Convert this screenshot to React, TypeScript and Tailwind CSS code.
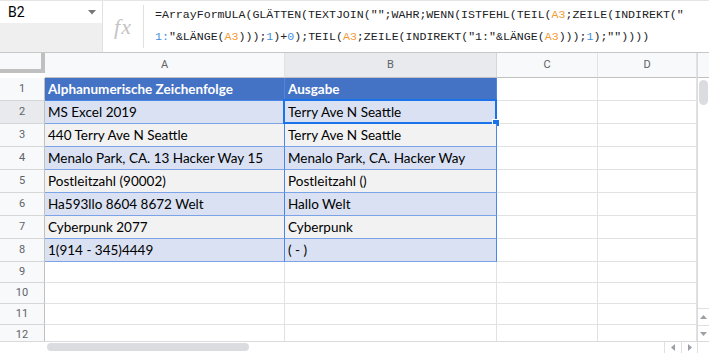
import { ChevronDown } from 'lucide-react';

const rows: [string, string][] = [
  ['MS Excel 2019', 'Terry Ave N Seattle'],
  ['440 Terry Ave N Seattle', 'Terry Ave N Seattle'],
  ['Menalo Park, CA. 13 Hacker Way 15', 'Menalo Park, CA. Hacker Way'],
  ['Postleitzahl (90002)', 'Postleitzahl ()'],
  ['Ha593llo 8604 8672 Welt', 'Hallo Welt'],
  ['Cyberpunk 2077', 'Cyberpunk'],
  ['1(914 - 345)4449', '( - )'],
];

const O = ({ children }: { children: string }) => <span className="text-[#f29a38]">{children}</span>;
const N = ({ children }: { children: string }) => <span className="text-[#3f8fe0]">{children}</span>;

const RowHead = ({ n, h, active }: { n: number; h: string; active?: boolean }) => (
  <div
    className={`w-[45px] shrink-0 ${h} flex items-center justify-center border-r border-b border-r-[#c0c0c0] border-b-[#d6d6d6] text-[11px] text-[#5f6368] ${active ? 'bg-[#e8eaed]' : 'bg-[#f8f9fa]'}`}
    style={{ fontFamily: 'Roboto, sans-serif' }}
  >
    {n}
  </div>
);

const Empty = ({ w }: { w: string }) => <div className={`${w} shrink-0 border-r border-b border-[#e2e2e2]`} />;

export default function App() {
  return (
    <div className="w-[709px] h-[353px] overflow-hidden bg-white flex flex-col" style={{ fontFamily: 'Roboto, sans-serif' }}>
      {/* formula bar */}
      <div className="h-[53px] shrink-0 flex border-t border-t-[#e5e5e5] border-b border-b-[#c7c7c7]">
        <div className="w-[103px] shrink-0 flex flex-col border-r border-[#e0e0e0]">
          <div className="h-[22px] bg-white flex items-center justify-between pl-[8px] pr-[6px] text-[14px] text-black">
            <span>B2</span>
            <svg width="8" height="5" viewBox="0 0 8 5"><path d="M0 0h8L4 4.5z" fill="#777" /></svg>
          </div>
          <div className="flex-1 bg-[#efefef]" />
        </div>
        <div className="w-[41px] shrink-0 flex items-center justify-center border-r border-[#e0e0e0] my-[4px]">
          <span className="italic text-[22px] text-[#c4c4c4] tracking-[1px]" style={{ fontFamily: '"Liberation Serif", serif' }}>fx</span>
        </div>
        <div className="flex-1 pl-[11px] pt-[3px] text-[11.6px] leading-[22px] text-[#202124] whitespace-pre" style={{ fontFamily: '"Liberation Mono", monospace' }}>
          <div>=ArrayFormULA(GLÄTTEN(TEXTJOIN("";WAHR;WENN(ISTFEHL(TEIL(<O>A3</O>;ZEILE(INDIREKT("</div>
          <div>
            <N>1:</N>"&LÄNGE(<O>A3</O>)));<N>1</N>)+<N>0</N>);TEIL(<O>A3</O>;ZEILE(INDIREKT("1:"&LÄNGE(<O>A3</O>)));<N>1</N>);""))))
          </div>
        </div>
      </div>

      {/* grid */}
      <div className="h-[288px] shrink-0 flex">
        <div className="w-[697px] shrink-0 overflow-hidden flex flex-col">
          {/* column headers */}
          <div className="h-[25px] shrink-0 flex text-[11px] text-[#5f6368]">
            <div className="w-[45px] shrink-0 bg-[#f8f9fa] border-r-4 border-b-4 border-[#c0c0c0] mb-[5px]" />
            <div className="w-[240px] shrink-0 flex items-center justify-center bg-[#f8f9fa] border-r border-b border-r-[#e2e2e2] border-b-[#c0c0c0]">A</div>
            <div className="w-[212px] shrink-0 flex items-center justify-center bg-[#e8eaed] border-r border-b border-r-[#d6d6d6] border-b-[#c0c0c0]">B</div>
            <div className="w-[101px] shrink-0 flex items-center justify-center bg-[#f8f9fa] border-r border-b border-r-[#e2e2e2] border-b-[#c0c0c0]">C</div>
            <div className="w-[99px] shrink-0 flex items-center justify-center bg-[#f8f9fa] border-r border-b border-r-[#e2e2e2] border-b-[#c0c0c0]">D</div>
          </div>

          {/* header row of table */}
          <div className="h-[23px] shrink-0 flex" style={{ fontFamily: 'Lato, sans-serif' }}>
            <RowHead n={1} h="h-[23px]" />
            <div className="w-[240px] shrink-0 bg-[#4472c4] border-r border-b border-[#4a86e8] flex items-center pl-[3px] text-[13.5px] font-bold text-white">Alphanumerische Zeichenfolge</div>
            <div className="w-[212px] shrink-0 bg-[#4472c4] border-r border-b border-[#4a86e8] flex items-center pl-[3px] text-[13.5px] font-bold text-white">Ausgabe</div>
            <Empty w="w-[101px]" />
            <Empty w="w-[99px]" />
          </div>

          {rows.map(([a, b], i) => {
            const bg = i % 2 === 0 ? 'bg-[#d9e1f2]' : 'bg-[#f2f2f2]';
            return (
              <div key={i} className="h-[23px] shrink-0 flex text-[13.5px] text-black" style={{ fontFamily: 'Lato, sans-serif' }}>
                <RowHead n={i + 2} h="h-[23px]" active={i === 0} />
                <div className={`w-[240px] shrink-0 ${bg} border-r border-b border-r-[#4a86e8] border-b-[#7ba3e6] flex items-center pl-[3px] whitespace-nowrap`}>{a}</div>
                <div className={`w-[212px] shrink-0 ${bg} border-r border-b border-r-[#4a86e8] border-b-[#7ba3e6] flex items-center pl-[3px] whitespace-nowrap relative`}>
                  {b}
                  {i === 0 && (
                    <div className="absolute -left-[2px] -top-[2px] -right-[1px] -bottom-[1px] border-2 border-[#1a73e8]">
                      <div className="absolute -right-[5px] -bottom-[5px] w-[8px] h-[8px] bg-[#1a73e8] border border-white" />
                    </div>
                  )}
                </div>
                <Empty w="w-[101px]" />
                <Empty w="w-[99px]" />
              </div>
            );
          })}

          {[9, 10, 11, 12].map((n) => (
            <div key={n} className="h-[21px] shrink-0 flex">
              <RowHead n={n} h="h-[21px]" />
              <Empty w="w-[240px]" />
              <Empty w="w-[212px]" />
              <Empty w="w-[101px]" />
              <Empty w="w-[99px]" />
            </div>
          ))}
        </div>

        {/* vertical scrollbar */}
        <div className="w-[12px] shrink-0 flex flex-col border-l border-[#dadada] bg-white">
          <div className="h-[25px] shrink-0 bg-[#f8f9fa] border-b border-[#c0c0c0]" />
          <div className="h-[27px] shrink-0 pt-[2px] px-[1px]">
            <div className="w-[9px] h-[25px] rounded-full bg-[#dadce0]" />
          </div>
          <div className="flex-1" />
          <div className="h-[17px] shrink-0 flex items-center justify-center border-t border-[#e0e0e0]">
            <svg width="7" height="4" viewBox="0 0 7 4"><path d="M0 4h7L3.5 0z" fill="#9aa0a6" /></svg>
          </div>
          <div className="h-[16px] shrink-0 flex items-center justify-center border-t border-[#e0e0e0]">
            <svg width="7" height="4" viewBox="0 0 7 4"><path d="M0 0h7L3.5 4z" fill="#9aa0a6" /></svg>
          </div>
        </div>
      </div>

      {/* horizontal scrollbar */}
      <div className="h-[12px] shrink-0 flex border-t border-[#dadada]">
        <div className="w-[47px] shrink-0" />
        <div className="w-[202px] h-[8px] mt-[1px] rounded-full bg-[#dadce0]" />
        <div className="flex-1" />
        <div className="w-[17px] shrink-0 flex items-center justify-center border-l border-[#e0e0e0]">
          <svg width="4" height="7" viewBox="0 0 4 7"><path d="M4 0v7L0 3.5z" fill="#9aa0a6" /></svg>
        </div>
        <div className="w-[16px] shrink-0 flex items-center justify-center border-l border-[#e0e0e0]">
          <svg width="4" height="7" viewBox="0 0 4 7"><path d="M0 0v7l4-3.5z" fill="#9aa0a6" /></svg>
        </div>
        <div className="w-[12px] shrink-0 border-l border-[#e0e0e0]" />
      </div>
    </div>
  );
}
